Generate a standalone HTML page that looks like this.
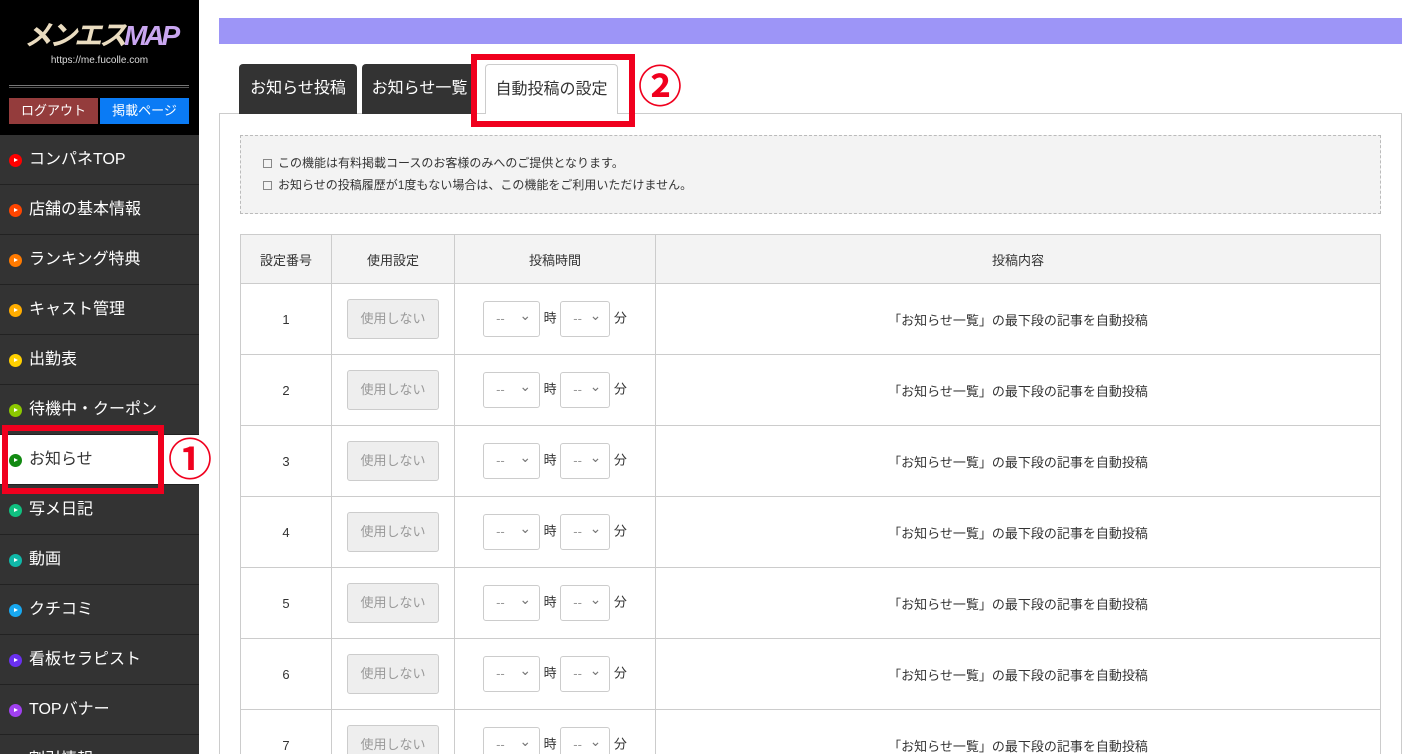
<!DOCTYPE html>
<html style="width:1414px;height:754px;overflow:hidden"><head><meta charset="utf-8"><style>
*{box-sizing:border-box;margin:0;padding:0}
body{width:1414px;height:754px;overflow:hidden;background:#fff;font-family:"Liberation Sans","Noto Sans CJK JP",sans-serif;position:relative}
.side{position:absolute;left:0;top:0;width:199px;height:754px;background:#333;overflow:hidden}
.top{height:135px;background:#000;position:relative}
.logo{position:absolute;left:24px;top:14px;font-size:28px;font-weight:bold;font-style:italic;letter-spacing:-3px;color:#eadcc0;white-space:nowrap}
.logo span{color:#c9a6f0}
.url{position:absolute;left:0;width:199px;top:55px;text-align:center;font-size:10px;color:#ddd}
.hr{position:absolute;left:9px;right:10px;top:85px;border-top:1px solid #777;border-bottom:1px solid #555;height:3px}
.b1{position:absolute;left:9px;top:98px;width:89px;height:26px;background:#943c3c;color:#fff;font-size:13px;text-align:center;line-height:26px}
.b2{position:absolute;left:100px;top:98px;width:89px;height:26px;background:#0a7bf5;color:#fff;font-size:13px;text-align:center;line-height:26px}
.mi{height:50px;border-bottom:1px solid #222;color:#fff;font-size:16px;line-height:49px;padding-left:29px;position:relative}
.mi i{position:absolute;left:9px;top:19px;width:13px;height:13px;border-radius:50%}
.mi i:after{content:"";position:absolute;left:5px;top:4px;border-left:4px solid #fff;border-top:2.5px solid transparent;border-bottom:2.5px solid transparent}
.mi.on{background:#fff;color:#333}
.bar{position:absolute;left:219px;top:18px;width:1183px;height:26px;background:#9d95f7}
.tab{position:absolute;top:64px;height:50px;background:#333;color:#fff;font-size:16px;line-height:50px;text-align:center;border-radius:4px 4px 0 0}
.box{position:absolute;left:219px;top:113px;width:1183px;height:660px;border:1px solid #ccc}
.main{position:absolute;left:0;top:0;width:1414px;height:754px;overflow:hidden}
.note{position:absolute;left:240px;top:135px;width:1141px;height:79px;border:1px dashed #bbb;background:#f3f3f3;font-size:12px;color:#333;padding:16px 0 0 22px;line-height:22px}
.note b{display:inline-block;width:9px;height:9px;border:1px solid #888;margin-right:6px;vertical-align:-1px;font-weight:normal}
table{position:absolute;left:240px;top:234px;width:1141px;border-collapse:collapse;font-size:13px;color:#333}
td,th{border:1px solid #ccc;text-align:center;font-weight:normal}
th{background:#f3f3f3;height:49px}
td{height:71px}
.btn{display:inline-block;width:92px;height:40px;background:#eee;border:1px solid #ccc;border-radius:3px;color:#999;line-height:38px;font-size:13px}
.sel{display:inline-block;width:57px;height:36px;border:1px solid #ccc;border-radius:3px;color:#999;line-height:34px;text-align:left;padding-left:12px;position:relative;vertical-align:middle}
.sel2{width:50px}
.sel:after{content:"⌄";position:absolute;right:8px;top:-4px;color:#777;font-size:14px}
.red{position:absolute;border:6px solid #f0001e}
.num{position:absolute;color:#f0001e;font-size:44px;font-weight:bold;line-height:44px}
</style></head><body>
<div class="main">
<div class="side">
<div class="top"><div class="logo">メンエス<span>MAP</span></div><div class="url">https://me.fucolle.com</div><div class="hr"></div><div class="b1">ログアウト</div><div class="b2">掲載ページ</div></div>
<div class="mi"><i style="background:#f00"></i>コンパネTOP</div>
<div class="mi"><i style="background:#ff4500"></i>店舗の基本情報</div>
<div class="mi"><i style="background:#ff7a00"></i>ランキング特典</div>
<div class="mi"><i style="background:#ffad00"></i>キャスト管理</div>
<div class="mi"><i style="background:#ffd000"></i>出勤表</div>
<div class="mi"><i style="background:#8cc800"></i>待機中・クーポン</div>
<div class="mi on"><i style="background:#128a12"></i>お知らせ</div>
<div class="mi"><i style="background:#10c080"></i>写メ日記</div>
<div class="mi"><i style="background:#10b8a8"></i>動画</div>
<div class="mi"><i style="background:#18a8f0"></i>クチコミ</div>
<div class="mi"><i style="background:#6a30f0"></i>看板セラピスト</div>
<div class="mi"><i style="background:#a040f0"></i>TOPバナー</div>
<div class="mi"><i style="background:#e030c0"></i>割引情報</div>
</div>
<div class="bar"></div>
<div class="box"></div>
<div class="tab" style="left:239px;width:118px">お知らせ投稿</div>
<div class="tab" style="left:362px;width:115px">お知らせ一覧</div>
<div class="tab" style="left:485px;width:133px;background:#fff;color:#333;border:1px solid #ccc;border-bottom:none;height:50px">自動投稿の設定</div>
<div class="note"><div><b></b>この機能は有料掲載コースのお客様のみへのご提供となります。</div><div><b></b>お知らせの投稿履歴が1度もない場合は、この機能をご利用いただけません。</div></div>
<table>
<tr><th style="width:91px">設定番号</th><th style="width:123px">使用設定</th><th style="width:201px">投稿時間</th><th>投稿内容</th></tr>
<tr><td>1</td><td><span class="btn">使用しない</span></td><td><span class="sel">--</span> 時 <span class="sel sel2">--</span> 分</td><td>「お知らせ一覧」の最下段の記事を自動投稿</td></tr>
<tr><td>2</td><td><span class="btn">使用しない</span></td><td><span class="sel">--</span> 時 <span class="sel sel2">--</span> 分</td><td>「お知らせ一覧」の最下段の記事を自動投稿</td></tr>
<tr><td>3</td><td><span class="btn">使用しない</span></td><td><span class="sel">--</span> 時 <span class="sel sel2">--</span> 分</td><td>「お知らせ一覧」の最下段の記事を自動投稿</td></tr>
<tr><td>4</td><td><span class="btn">使用しない</span></td><td><span class="sel">--</span> 時 <span class="sel sel2">--</span> 分</td><td>「お知らせ一覧」の最下段の記事を自動投稿</td></tr>
<tr><td>5</td><td><span class="btn">使用しない</span></td><td><span class="sel">--</span> 時 <span class="sel sel2">--</span> 分</td><td>「お知らせ一覧」の最下段の記事を自動投稿</td></tr>
<tr><td>6</td><td><span class="btn">使用しない</span></td><td><span class="sel">--</span> 時 <span class="sel sel2">--</span> 分</td><td>「お知らせ一覧」の最下段の記事を自動投稿</td></tr>
<tr><td>7</td><td><span class="btn">使用しない</span></td><td><span class="sel">--</span> 時 <span class="sel sel2">--</span> 分</td><td>「お知らせ一覧」の最下段の記事を自動投稿</td></tr>
</table>
<div class="red" style="left:471px;top:54px;width:164px;height:73px"></div>
<div class="num" style="left:638px;top:66px">②</div>
<div class="red" style="left:2px;top:425px;width:162px;height:69px"></div>
<div class="num" style="left:168px;top:439px">①</div>
</div>
</body></html>
